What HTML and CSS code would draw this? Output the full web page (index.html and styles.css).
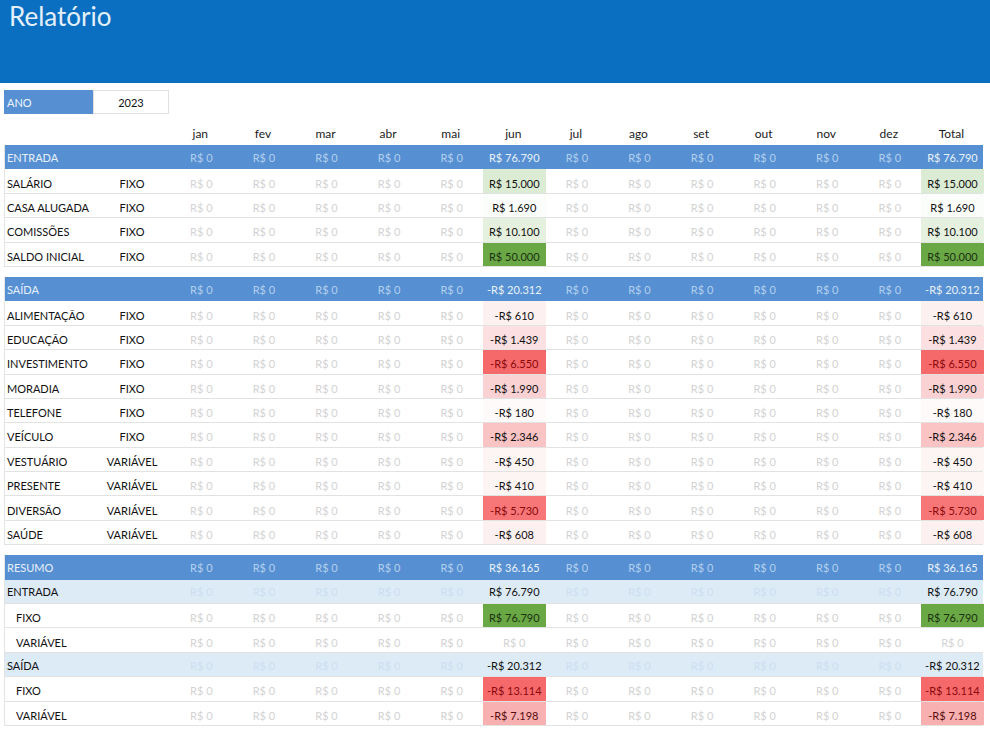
FILE: index.html
```html
<!DOCTYPE html>
<html lang="pt-BR">
<head>
<meta charset="utf-8">
<title>Relatório</title>
<link rel="stylesheet" href="styles.css">
</head>
<body>
<header class="banner"><h1 class="title">Relatório</h1></header>

<div class="ano">
  <span class="ano-label">ANO</span>
  <span class="ano-value">2023</span>
</div>

<div class="months">
  <span></span><span></span>
  <span>jan</span><span>fev</span><span>mar</span><span>abr</span><span>mai</span><span>jun</span><span>jul</span><span>ago</span><span>set</span><span>out</span><span>nov</span><span>dez</span><span>Total</span>
</div>

<section class="block">
  <div class="row sec">
    <span class="lab">ENTRADA</span><span></span>
    <span class="z">R$ 0</span><span class="z">R$ 0</span><span class="z">R$ 0</span><span class="z">R$ 0</span><span class="z">R$ 0</span><span class="v">R$ 76.790</span><span class="z">R$ 0</span><span class="z">R$ 0</span><span class="z">R$ 0</span><span class="z">R$ 0</span><span class="z">R$ 0</span><span class="z">R$ 0</span><span class="v">R$ 76.790</span>
  </div>
  <div class="row">
    <span class="lab">SALÁRIO</span><span class="typ">FIXO</span>
    <span class="z">R$ 0</span><span class="z">R$ 0</span><span class="z">R$ 0</span><span class="z">R$ 0</span><span class="z">R$ 0</span><span class="v g1">R$ 15.000</span><span class="z">R$ 0</span><span class="z">R$ 0</span><span class="z">R$ 0</span><span class="z">R$ 0</span><span class="z">R$ 0</span><span class="z">R$ 0</span><span class="v g1">R$ 15.000</span>
  </div>
  <div class="row">
    <span class="lab">CASA ALUGADA</span><span class="typ">FIXO</span>
    <span class="z">R$ 0</span><span class="z">R$ 0</span><span class="z">R$ 0</span><span class="z">R$ 0</span><span class="z">R$ 0</span><span class="v g0">R$ 1.690</span><span class="z">R$ 0</span><span class="z">R$ 0</span><span class="z">R$ 0</span><span class="z">R$ 0</span><span class="z">R$ 0</span><span class="z">R$ 0</span><span class="v g0">R$ 1.690</span>
  </div>
  <div class="row">
    <span class="lab">COMISSÕES</span><span class="typ">FIXO</span>
    <span class="z">R$ 0</span><span class="z">R$ 0</span><span class="z">R$ 0</span><span class="z">R$ 0</span><span class="z">R$ 0</span><span class="v g2">R$ 10.100</span><span class="z">R$ 0</span><span class="z">R$ 0</span><span class="z">R$ 0</span><span class="z">R$ 0</span><span class="z">R$ 0</span><span class="z">R$ 0</span><span class="v g2">R$ 10.100</span>
  </div>
  <div class="row">
    <span class="lab">SALDO INICIAL</span><span class="typ">FIXO</span>
    <span class="z">R$ 0</span><span class="z">R$ 0</span><span class="z">R$ 0</span><span class="z">R$ 0</span><span class="z">R$ 0</span><span class="v g3">R$ 50.000</span><span class="z">R$ 0</span><span class="z">R$ 0</span><span class="z">R$ 0</span><span class="z">R$ 0</span><span class="z">R$ 0</span><span class="z">R$ 0</span><span class="v g3">R$ 50.000</span>
  </div>
</section>

<section class="block">
  <div class="row sec">
    <span class="lab">SAÍDA</span><span></span>
    <span class="z">R$ 0</span><span class="z">R$ 0</span><span class="z">R$ 0</span><span class="z">R$ 0</span><span class="z">R$ 0</span><span class="v">-R$ 20.312</span><span class="z">R$ 0</span><span class="z">R$ 0</span><span class="z">R$ 0</span><span class="z">R$ 0</span><span class="z">R$ 0</span><span class="z">R$ 0</span><span class="v">-R$ 20.312</span>
  </div>
  <div class="row">
    <span class="lab">ALIMENTAÇÃO</span><span class="typ">FIXO</span>
    <span class="z">R$ 0</span><span class="z">R$ 0</span><span class="z">R$ 0</span><span class="z">R$ 0</span><span class="z">R$ 0</span><span class="v r1">-R$ 610</span><span class="z">R$ 0</span><span class="z">R$ 0</span><span class="z">R$ 0</span><span class="z">R$ 0</span><span class="z">R$ 0</span><span class="z">R$ 0</span><span class="v r1">-R$ 610</span>
  </div>
  <div class="row">
    <span class="lab">EDUCAÇÃO</span><span class="typ">FIXO</span>
    <span class="z">R$ 0</span><span class="z">R$ 0</span><span class="z">R$ 0</span><span class="z">R$ 0</span><span class="z">R$ 0</span><span class="v r3">-R$ 1.439</span><span class="z">R$ 0</span><span class="z">R$ 0</span><span class="z">R$ 0</span><span class="z">R$ 0</span><span class="z">R$ 0</span><span class="z">R$ 0</span><span class="v r3">-R$ 1.439</span>
  </div>
  <div class="row">
    <span class="lab">INVESTIMENTO</span><span class="typ">FIXO</span>
    <span class="z">R$ 0</span><span class="z">R$ 0</span><span class="z">R$ 0</span><span class="z">R$ 0</span><span class="z">R$ 0</span><span class="v r6">-R$ 6.550</span><span class="z">R$ 0</span><span class="z">R$ 0</span><span class="z">R$ 0</span><span class="z">R$ 0</span><span class="z">R$ 0</span><span class="z">R$ 0</span><span class="v r6">-R$ 6.550</span>
  </div>
  <div class="row">
    <span class="lab">MORADIA</span><span class="typ">FIXO</span>
    <span class="z">R$ 0</span><span class="z">R$ 0</span><span class="z">R$ 0</span><span class="z">R$ 0</span><span class="z">R$ 0</span><span class="v r4">-R$ 1.990</span><span class="z">R$ 0</span><span class="z">R$ 0</span><span class="z">R$ 0</span><span class="z">R$ 0</span><span class="z">R$ 0</span><span class="z">R$ 0</span><span class="v r4">-R$ 1.990</span>
  </div>
  <div class="row">
    <span class="lab">TELEFONE</span><span class="typ">FIXO</span>
    <span class="z">R$ 0</span><span class="z">R$ 0</span><span class="z">R$ 0</span><span class="z">R$ 0</span><span class="z">R$ 0</span><span class="v r0">-R$ 180</span><span class="z">R$ 0</span><span class="z">R$ 0</span><span class="z">R$ 0</span><span class="z">R$ 0</span><span class="z">R$ 0</span><span class="z">R$ 0</span><span class="v r0">-R$ 180</span>
  </div>
  <div class="row">
    <span class="lab">VEÍCULO</span><span class="typ">FIXO</span>
    <span class="z">R$ 0</span><span class="z">R$ 0</span><span class="z">R$ 0</span><span class="z">R$ 0</span><span class="z">R$ 0</span><span class="v r5">-R$ 2.346</span><span class="z">R$ 0</span><span class="z">R$ 0</span><span class="z">R$ 0</span><span class="z">R$ 0</span><span class="z">R$ 0</span><span class="z">R$ 0</span><span class="v r5">-R$ 2.346</span>
  </div>
  <div class="row">
    <span class="lab">VESTUÁRIO</span><span class="typ">VARIÁVEL</span>
    <span class="z">R$ 0</span><span class="z">R$ 0</span><span class="z">R$ 0</span><span class="z">R$ 0</span><span class="z">R$ 0</span><span class="v r2">-R$ 450</span><span class="z">R$ 0</span><span class="z">R$ 0</span><span class="z">R$ 0</span><span class="z">R$ 0</span><span class="z">R$ 0</span><span class="z">R$ 0</span><span class="v r2">-R$ 450</span>
  </div>
  <div class="row">
    <span class="lab">PRESENTE</span><span class="typ">VARIÁVEL</span>
    <span class="z">R$ 0</span><span class="z">R$ 0</span><span class="z">R$ 0</span><span class="z">R$ 0</span><span class="z">R$ 0</span><span class="v r2">-R$ 410</span><span class="z">R$ 0</span><span class="z">R$ 0</span><span class="z">R$ 0</span><span class="z">R$ 0</span><span class="z">R$ 0</span><span class="z">R$ 0</span><span class="v r2">-R$ 410</span>
  </div>
  <div class="row">
    <span class="lab">DIVERSÃO</span><span class="typ">VARIÁVEL</span>
    <span class="z">R$ 0</span><span class="z">R$ 0</span><span class="z">R$ 0</span><span class="z">R$ 0</span><span class="z">R$ 0</span><span class="v r6b">-R$ 5.730</span><span class="z">R$ 0</span><span class="z">R$ 0</span><span class="z">R$ 0</span><span class="z">R$ 0</span><span class="z">R$ 0</span><span class="z">R$ 0</span><span class="v r6b">-R$ 5.730</span>
  </div>
  <div class="row">
    <span class="lab">SAÚDE</span><span class="typ">VARIÁVEL</span>
    <span class="z">R$ 0</span><span class="z">R$ 0</span><span class="z">R$ 0</span><span class="z">R$ 0</span><span class="z">R$ 0</span><span class="v r1">-R$ 608</span><span class="z">R$ 0</span><span class="z">R$ 0</span><span class="z">R$ 0</span><span class="z">R$ 0</span><span class="z">R$ 0</span><span class="z">R$ 0</span><span class="v r1">-R$ 608</span>
  </div>
</section>

<section class="block">
  <div class="row sec">
    <span class="lab">RESUMO</span><span></span>
    <span class="z">R$ 0</span><span class="z">R$ 0</span><span class="z">R$ 0</span><span class="z">R$ 0</span><span class="z">R$ 0</span><span class="v">R$ 36.165</span><span class="z">R$ 0</span><span class="z">R$ 0</span><span class="z">R$ 0</span><span class="z">R$ 0</span><span class="z">R$ 0</span><span class="z">R$ 0</span><span class="v">R$ 36.165</span>
  </div>
  <div class="row sub">
    <span class="lab">ENTRADA</span><span></span>
    <span class="z">R$ 0</span><span class="z">R$ 0</span><span class="z">R$ 0</span><span class="z">R$ 0</span><span class="z">R$ 0</span><span class="v">R$ 76.790</span><span class="z">R$ 0</span><span class="z">R$ 0</span><span class="z">R$ 0</span><span class="z">R$ 0</span><span class="z">R$ 0</span><span class="z">R$ 0</span><span class="v">R$ 76.790</span>
  </div>
  <div class="row">
    <span class="lab ind">FIXO</span><span></span>
    <span class="z">R$ 0</span><span class="z">R$ 0</span><span class="z">R$ 0</span><span class="z">R$ 0</span><span class="z">R$ 0</span><span class="v g3">R$ 76.790</span><span class="z">R$ 0</span><span class="z">R$ 0</span><span class="z">R$ 0</span><span class="z">R$ 0</span><span class="z">R$ 0</span><span class="z">R$ 0</span><span class="v g3">R$ 76.790</span>
  </div>
  <div class="row">
    <span class="lab ind">VARIÁVEL</span><span></span>
    <span class="z">R$ 0</span><span class="z">R$ 0</span><span class="z">R$ 0</span><span class="z">R$ 0</span><span class="z">R$ 0</span><span class="z">R$ 0</span><span class="z">R$ 0</span><span class="z">R$ 0</span><span class="z">R$ 0</span><span class="z">R$ 0</span><span class="z">R$ 0</span><span class="z">R$ 0</span><span class="z">R$ 0</span>
  </div>
  <div class="row sub">
    <span class="lab">SAÍDA</span><span></span>
    <span class="z">R$ 0</span><span class="z">R$ 0</span><span class="z">R$ 0</span><span class="z">R$ 0</span><span class="z">R$ 0</span><span class="v">-R$ 20.312</span><span class="z">R$ 0</span><span class="z">R$ 0</span><span class="z">R$ 0</span><span class="z">R$ 0</span><span class="z">R$ 0</span><span class="z">R$ 0</span><span class="v">-R$ 20.312</span>
  </div>
  <div class="row">
    <span class="lab ind">FIXO</span><span></span>
    <span class="z">R$ 0</span><span class="z">R$ 0</span><span class="z">R$ 0</span><span class="z">R$ 0</span><span class="z">R$ 0</span><span class="v r6">-R$ 13.114</span><span class="z">R$ 0</span><span class="z">R$ 0</span><span class="z">R$ 0</span><span class="z">R$ 0</span><span class="z">R$ 0</span><span class="z">R$ 0</span><span class="v r6">-R$ 13.114</span>
  </div>
  <div class="row">
    <span class="lab ind">VARIÁVEL</span><span></span>
    <span class="z">R$ 0</span><span class="z">R$ 0</span><span class="z">R$ 0</span><span class="z">R$ 0</span><span class="z">R$ 0</span><span class="v r7">-R$ 7.198</span><span class="z">R$ 0</span><span class="z">R$ 0</span><span class="z">R$ 0</span><span class="z">R$ 0</span><span class="z">R$ 0</span><span class="z">R$ 0</span><span class="v r7">-R$ 7.198</span>
  </div>
</section>
</body>
</html>
```

FILE: styles.css
```css
* { box-sizing: border-box; }

body {
  margin: 0;
  background: #ffffff;
  font-family: Lato, "Open Sans", "Liberation Sans", sans-serif;
  font-size: 11px;
  color: #111;
}

.banner {
  height: 83px;
  background: #0b6fc1;
  padding: 1px 0 0 9px;
}

.title {
  margin: 0;
  font-weight: 400;
  font-size: 26px;
  line-height: 30px;
  color: #e3f0fb;
}

.ano {
  display: grid;
  grid-template-columns: 89px 76px;
  height: 24px;
  margin: 7px 0 0 4px;
}

.ano-label {
  background: #5690d2;
  color: #eef5fc;
  display: flex;
  align-items: center;
  padding-left: 3px;
}

.ano-value {
  border: 1px solid #e0e0e0;
  display: flex;
  align-items: center;
  justify-content: center;
  color: #111;
}

.months,
.row {
  display: grid;
  grid-template-columns: 89px 76px repeat(13, 62.6px);
}

.months {
  height: 24px;
  margin: 7px 0 0 4px;
  align-items: center;
  font-size: 12px;
  color: #1c1c1c;
}

.months span { text-align: center; }

.block {
  margin: 0 0 10px 4px;
  border-left: 1px solid #e4e4e4;
  width: 979px;
}

.row {
  height: 24.4px;
  border-bottom: 1px solid #e2e2e2;
}

.row > span {
  display: flex;
  align-items: center;
  justify-content: center;
  height: 100%;
  padding-top: 4px;
  white-space: nowrap;
}

.row > .lab {
  justify-content: flex-start;
  padding-left: 2px;
  color: #111;
}

.row > .lab.ind { padding-left: 11px; }

.typ { color: #111; }

.z { color: #d3d3d3; }

.v { color: #111; }

/* section header rows */
.sec {
  background: #5690d2;
  border-bottom: none;
}
.sec > span { padding-top: 0; }
.sec > .lab { color: #e7f0fa; }
.sec > .z { color: #b3cfee; }
.sec > .v { color: #e9f2fb; }

/* light summary rows */
.sub { background: #ddebf7; }
.sub > span { padding-top: 1px; }
.sub > .z { color: #cddff0; }

/* colour scale */
.g0 { background: #fbfdfa; }
.g1 { background: #dcebd4; }
.g2 { background: #e6f0df; }
.g3 { background: #6aa745; color: #1b3210; }

.r0 { background: #fefafa; }
.r1 { background: #fdf0f0; }
.r2 { background: #fdf4f4; }
.r3 { background: #fcdfe0; }
.r4 { background: #fbd2d3; }
.r5 { background: #fac3c4; }
.r6 { background: #f6696b; color: #8a0a0c; }
.r6b { background: #f77778; color: #8a0a0c; }
.r7 { background: #f9b0b1; color: #5a0e0f; }
```
